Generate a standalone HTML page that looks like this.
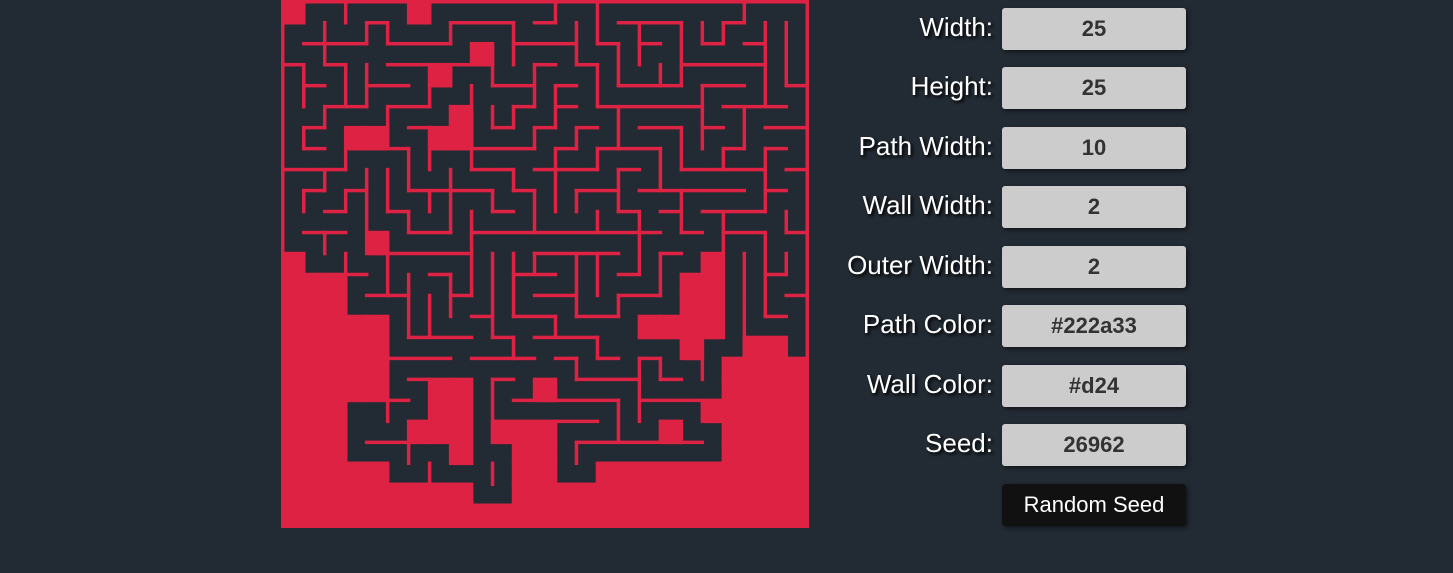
<!DOCTYPE html>
<html><head><meta charset="utf-8"><style>
html,body{margin:0;padding:0;background:#222a33;width:1453px;height:573px;overflow:hidden;font-family:"Liberation Sans",Arial,sans-serif}
#maze{position:absolute;left:281px;top:0}
.lbl{position:absolute;right:460px;width:200px;text-align:right;color:#fff;font-size:26px;line-height:42px;text-shadow:2px 2px 3px #000}
.inp{position:absolute;left:1002px;width:184px;height:42px;background:#ccc;border-radius:3px;box-shadow:2px 2px 4px rgba(0,0,0,.5);text-align:center;line-height:42px;font-weight:bold;font-size:22px;color:#333}
.btn{position:absolute;left:1002px;top:484px;width:184px;height:42px;background:#111;border-radius:3px;box-shadow:2px 2px 4px rgba(0,0,0,.5);text-align:center;line-height:42px;font-size:22px;color:#fff}
</style></head><body>
<svg id="maze" width="528" height="528" viewBox="0 0 528.5 528.5"></svg>

<div class="lbl" style="top:6px">Width:</div><div class="inp" style="top:8px">25</div>
<div class="lbl" style="top:65px">Height:</div><div class="inp" style="top:67px">25</div>
<div class="lbl" style="top:125px">Path Width:</div><div class="inp" style="top:127px">10</div>
<div class="lbl" style="top:184px">Wall Width:</div><div class="inp" style="top:186px">2</div>
<div class="lbl" style="top:244px">Outer Width:</div><div class="inp" style="top:246px">2</div>
<div class="lbl" style="top:303px">Path Color:</div><div class="inp" style="top:305px">#222a33</div>
<div class="lbl" style="top:363px">Wall Color:</div><div class="inp" style="top:365px">#d24</div>
<div class="lbl" style="top:422px">Seed:</div><div class="inp" style="top:424px">26962</div>
<div class="btn">Random Seed</div>

<script>
var R=[
".#####.##################",
"#########################",
"#########.###############",
"#######.#################",
"#########################",
"########.################",
"###..##..################",
"#########################",
"#########################",
"#########################",
"#########################",
"####.####################",
".###################.####",
"...################..####",
"...################..####",
".....############....####",
".....##############.##..#",
".....################....",
".....##..###.########....",
"...####..###########.....",
"...###...#...#####.##....",
"...#####.##..########....",
".....######..##..........",
".........##..............",
"........................."];
var H=[[1,4,5],[1,8,11],[1,12,13],[1,16,19],[1,21,22],
[2,1,4],[2,5,8],[2,11,14],[2,15,16],[2,17,18],[2,20,21],[2,22,23],
[3,0,1],[3,2,3],[3,5,9],[3,12,13],[3,14,15],[3,19,23],
[4,1,2],[4,4,6],[4,10,12],[4,13,14],[4,16,19],[4,20,22],[4,24,25],
[5,2,4],[5,5,7],[5,11,12],[5,13,14],[5,15,20],[5,21,24],
[6,1,2],[6,6,7],[6,10,11],[6,12,13],[6,14,15],[6,17,19],[6,20,21],[6,23,25],
[7,1,2],[7,5,6],[7,9,12],[7,13,14],[7,15,18],[7,21,22],[7,23,24],
[8,0,3],[8,9,11],[8,12,15],[8,16,17],[8,19,23],[8,24,25],
[9,1,2],[9,3,4],[9,6,10],[9,11,12],[9,14,16],[9,17,22],[9,23,24],
[10,2,3],[10,5,6],[10,10,11],[10,16,17],[10,18,19],[10,20,23],
[11,1,3],[11,6,8],[11,9,18],[11,19,20],[11,21,23],[11,24,25],
[12,5,9],[12,12,16],[12,18,19],
[13,3,4],[13,7,8],[13,11,13],[13,16,17],[13,23,24],
[14,4,6],[14,8,9],[14,12,14],[14,16,18],[14,24,25],
[15,9,10],[15,11,13],[15,14,16],[15,23,24],
[16,6,9],[16,10,11],[16,12,15],
[17,5,8],[17,9,12],[17,13,14],[17,15,16],[17,17,18],
[18,6,7],[18,10,11],[18,14,17],[18,18,19],
[19,5,6],[19,11,16],[19,17,20],
[20,13,15],[21,4,6],[21,14,20]];
var V=[[1,3,5],[1,6,7],[1,9,10],[2,1,3],[2,5,6],[2,8,9],[2,11,12],
[3,0,1],[3,3,5],[3,7,8],[3,9,10],[3,12,13],
[4,1,2],[4,3,5],[4,8,11],[5,1,2],[5,5,6],[5,8,10],[5,12,14],[5,19,20],
[6,7,9],[6,10,11],[6,13,16],[6,21,22],[7,3,5],[7,6,8],[7,9,10],[7,14,16],[7,22,23],
[8,1,2],[8,5,6],[8,8,11],[8,13,15],[9,4,8],[9,10,14],
[10,3,4],[10,5,6],[10,9,10],[10,12,16],[10,18,21],[10,22,23],
[11,1,3],[11,5,6],[11,8,9],[11,12,15],[11,16,17],
[12,3,5],[12,6,7],[12,9,11],[12,12,13],
[13,0,1],[13,4,6],[13,7,10],[13,15,16],
[14,1,3],[14,6,7],[14,9,10],[14,12,15],[14,17,18],[14,21,22],
[15,0,2],[15,3,5],[15,7,8],[15,10,11],[15,12,14],[15,16,17],
[16,2,4],[16,5,7],[16,8,10],[16,14,15],[16,19,21],
[17,1,3],[17,10,13],[17,17,20],[18,3,4],[18,7,9],[18,12,14],[18,17,18],
[19,1,4],[19,6,8],[19,9,11],[20,1,2],[20,4,7],[20,17,18],
[21,1,2],[21,7,8],[21,10,12],[22,0,1],[22,5,7],[22,12,17],
[23,1,5],[23,7,10],[23,11,15],[24,1,4],[24,10,11],[24,12,13]];
var s='<rect width="528.5" height="528.5" fill="#dd2244"/>',P=21,W=3.5,r,c;
for(r=0;r<25;r++)for(c=0;c<25;c++)if(R[r][c]=='#')s+='<rect x="'+(P*c+W)+'" y="'+(P*r+W)+'" width="'+(P+1)+'" height="'+(P+1)+'" fill="#222a33"/>';
for(r=0;r<25;r++)for(c=0;c<25;c++)if(R[r][c]=='.')s+='<rect x="'+(P*c)+'" y="'+(P*r)+'" width="'+(P+W)+'" height="'+(P+W)+'" fill="#dd2244"/>';
H.forEach(function(h){s+='<rect x="'+(P*h[1])+'" y="'+(P*h[0])+'" width="'+(P*(h[2]-h[1])+W)+'" height="'+W+'" fill="#dd2244"/>';});
V.forEach(function(v){s+='<rect x="'+(P*v[0])+'" y="'+(P*v[1])+'" width="'+W+'" height="'+(P*(v[2]-v[1])+W)+'" fill="#dd2244"/>';});
s+='<rect x="1.75" y="1.75" width="525" height="525" fill="none" stroke="#dd2244" stroke-width="3.5"/>';
document.getElementById('maze').innerHTML=s;
</script>
</body></html>
